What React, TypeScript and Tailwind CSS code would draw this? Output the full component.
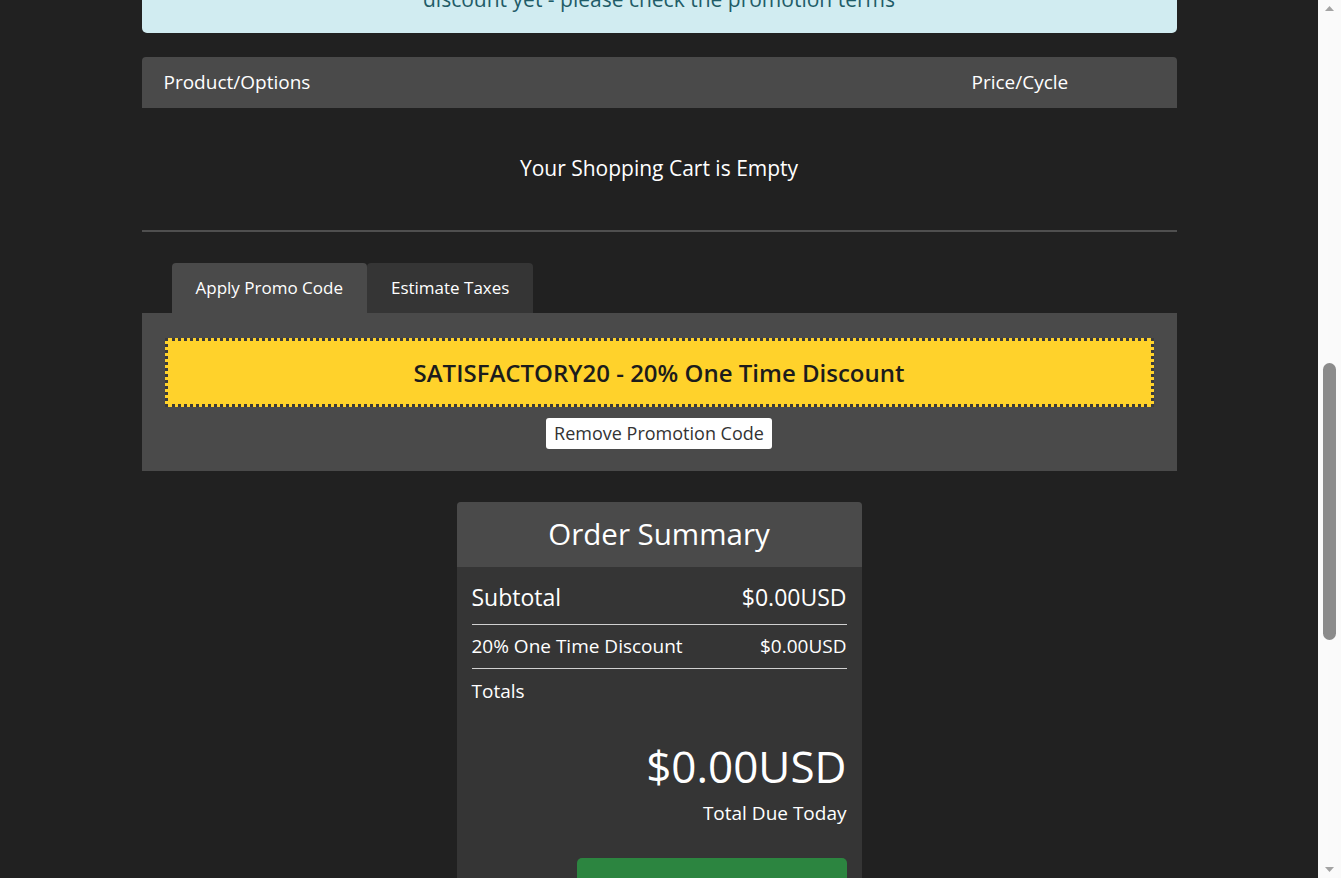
const summaryRows = [
  { label: "Subtotal", amount: "$0.00USD", big: true },
  { label: "20% One Time Discount", amount: "$0.00USD", big: false },
];

function ScrollTrack() {
  return (
    <div className="flex h-full w-[23px] shrink-0 flex-col items-center bg-[#fafafa]">
      <svg width="11" height="12" viewBox="0 0 11 12" className="mt-[2px]">
        <path d="M1 9 L5.5 4 L10 9 Z" fill="#a3a3a3" />
      </svg>
      <div className="mt-[349px] h-[277px] w-[13px] rounded-full bg-[#8b8b8b]" />
      <div className="flex-1" />
      <svg width="11" height="12" viewBox="0 0 11 12" className="mb-[2px]">
        <path d="M1 3 L5.5 8 L10 3 Z" fill="#a3a3a3" />
      </svg>
    </div>
  );
}

export default function App() {
  return (
    <div className="flex h-screen w-full overflow-hidden bg-[#212121] font-['Open_Sans',sans-serif]">
      <div className="flex-1 overflow-hidden">
        <div className="mx-auto w-[1035px] -mt-[62px]">
          {/* promo notice */}
          <div className="rounded-[5px] bg-[#d1ecf1] px-6 pt-[19px] pb-[20px] text-center text-[21px] leading-[28px] text-[#1f5c68]">
            <p>The promotion code you entered has been applied to your cart but no items qualify for the</p>
            <p>discount yet - please check the promotion terms</p>
          </div>

          {/* cart table */}
          <div className="mt-6 flex h-[51px] items-center rounded-t-[4px] bg-[#4a4a4a] text-[19px] text-white">
            <div className="w-[830px] pl-[22px]">Product/Options</div>
            <div>Price/Cycle</div>
          </div>
          <div className="flex h-[124px] items-center justify-center border-b-2 border-[#4f4f4f] text-[21px] text-white">
            Your Shopping Cart is Empty
          </div>

          {/* promo / tax tabs */}
          <div className="mt-[31px] flex pl-[30px] text-[17px] text-white">
            <div className="flex h-[50px] items-center rounded-t-[4px] bg-[#4a4a4a] px-[24px]">Apply Promo Code</div>
            <div className="flex h-[50px] items-center rounded-t-[4px] bg-[#353535] px-[24px]">Estimate Taxes</div>
          </div>
          <div className="flex flex-col items-center bg-[#4a4a4a] px-[23px] pt-[25px] pb-[22px]">
            <div className="flex h-[69px] w-full items-center justify-center border-[3px] border-dotted border-[#3b3b3b] bg-[#ffd22b] text-[24px] font-semibold text-[#1c1c1c]">
              SATISFACTORY20 - 20% One Time Discount
            </div>
            <button className="mt-[11px] h-[31px] rounded-[3px] bg-white px-[8px] text-[18px] text-[#333]">
              Remove Promotion Code
            </button>
          </div>

          {/* order summary */}
          <div className="mx-auto mt-[31px] w-[405px] overflow-hidden rounded-t-[4px] bg-[#353535] text-white">
            <div className="flex h-[65px] items-center justify-center bg-[#4a4a4a] text-[29.5px]">Order Summary</div>
            <div className="px-[15px] pt-[8px]">
              {summaryRows.map((row) => (
                <div
                  key={row.label}
                  className={`flex items-center justify-between border-b border-[#d0d0d0] ${
                    row.big ? "h-[50px] pb-[4px] text-[23px]" : "h-[44px] text-[19px]"
                  }`}
                >
                  <span>{row.label}</span>
                  <span>{row.amount}</span>
                </div>
              ))}
              <div className="pt-[9px] text-[19px] leading-[26px]">Totals</div>
              <div className="mt-[36px] text-right text-[44px] leading-[52px]">$0.00USD</div>
              <div className="mt-[8px] text-right text-[19px] leading-[26px]">Total Due Today</div>
              <div className="mt-[32px] flex justify-end pb-6">
                <button className="flex h-[72px] w-[270px] items-center justify-center rounded-[5px] bg-[#2c8540] text-[19px] text-white">
                  Checkout
                </button>
              </div>
            </div>
          </div>
          <div className="h-20" />
        </div>
      </div>
      <ScrollTrack />
    </div>
  );
}
